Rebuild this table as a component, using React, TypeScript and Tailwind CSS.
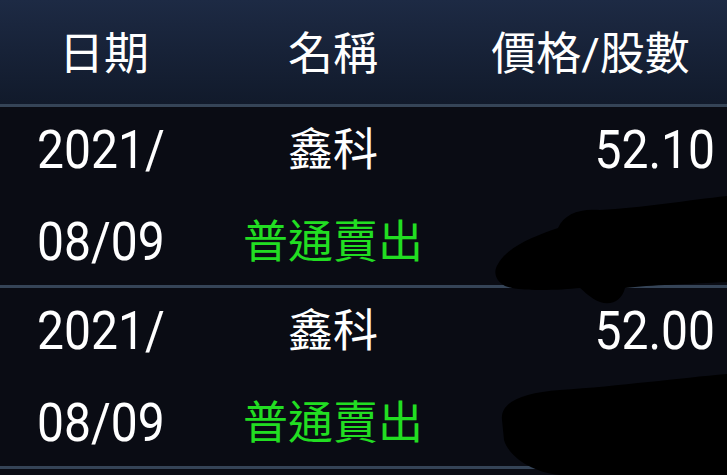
const rows = [
  { date1: '2021/', date2: '08/09', name: '鑫科', side: '普通賣出', price: '52.10' },
  { date1: '2021/', date2: '08/09', name: '鑫科', side: '普通賣出', price: '52.00' },
];

const font = { fontFamily: 'Roboto, "Noto Sans CJK TC", sans-serif' };

export default function App() {
  return (
    <div className="relative h-[475px] w-[727px] overflow-hidden bg-[#0a0c14] text-white" style={font}>
      <div className="grid h-[104px] grid-cols-[208px_250px_1fr] items-center bg-gradient-to-b from-[#1d2a44] to-[#111a2b] pt-[4px] text-[45px] leading-none">
        <div className="text-center">日期</div>
        <div className="text-center">名稱</div>
        <div className="pr-[4px] text-center">價格/股數</div>
      </div>
      <div className="h-[3px] bg-[#354457]" />

      {rows.map((row, i) => (
        <div key={i}>
          <div className="grid h-[178px] grid-cols-[208px_250px_1fr] grid-rows-[86px_1fr] items-center bg-[#0a0c14]">
            <div className="origin-center scale-y-[1.1] pl-[37px] text-[48px] leading-none">{row.date1}</div>
            <div className="text-center text-[45px] leading-none">{row.name}</div>
            <div className="origin-center scale-y-[1.1] pr-[12px] text-right text-[48px] leading-none">{row.price}</div>
            <div className="origin-center scale-y-[1.1] pl-[37px] pt-[6px] text-[48px] leading-none">{row.date2}</div>
            <div className="pt-[6px] text-center text-[45px] leading-none text-[#22de22]">{row.side}</div>
            <div />
          </div>
          <div className="h-[3px] bg-[#354457]" />
        </div>
      ))}

      {/* redaction scribbles */}
      <svg className="pointer-events-none absolute inset-0" width="727" height="475" viewBox="0 0 727 475">
        <path
          d="M498 264 C508 246 535 236 558 228 C564 214 580 208 600 210 C640 208 690 200 727 196 L727 282 C690 284 650 285 625 288 C622 300 612 306 600 302 C590 298 585 292 580 288 C560 290 520 292 505 286 C495 281 493 271 498 264 Z"
          fill="#000"
        />
        <path
          d="M502 420 C500 402 522 393 560 390 C620 386 680 378 727 374 L727 475 L560 475 C530 472 508 455 504 440 Z"
          fill="#000"
        />
      </svg>
    </div>
  );
}
